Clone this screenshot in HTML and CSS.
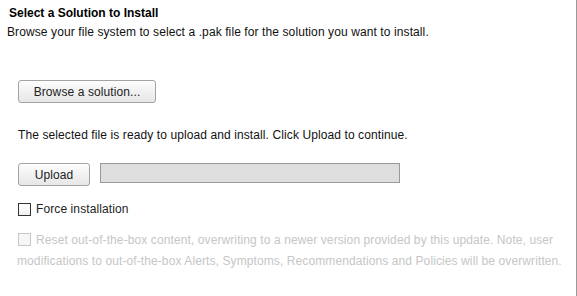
FILE: index.html
```html
<!DOCTYPE html>
<html>
<head>
<meta charset="utf-8">
<link rel="stylesheet" href="styles.css">
</head>
<body>
<div class="panel">
  <div class="header">
    <div class="title">Select a Solution to Install</div>
    <div class="desc">Browse your file system to select a .pak file for the solution you want to install.</div>
  </div>
  <div class="content">
    <button class="btn browse">Browse a solution...</button>
    <p class="status">The selected file is ready to upload and install. Click Upload to continue.</p>
    <div class="upload-row">
      <button class="btn upload">Upload</button>
      <div class="file-field"></div>
    </div>
    <label class="check"><span class="box"></span>Force installation</label>
    <p class="reset"><span class="box disabled"></span>Reset out-of-the-box content, overwriting to a newer version provided by this update. Note, user modifications to out-of-the-box Alerts, Symptoms, Recommendations and Policies will be overwritten.</p>
  </div>
</div>
</body>
</html>
```

FILE: styles.css
```css
html, body {
  margin: 0;
  padding: 0;
  background: #ffffff;
}
body {
  font-family: "Liberation Sans", Arial, sans-serif;
  font-size: 12px;
  line-height: 14px;
  color: #111;
  letter-spacing: 0.1px;
}
.panel {
  width: 576px;
  height: 296px;
  border-right: 1px solid #999;
  box-sizing: content-box;
}
.header {
  padding-top: 6px;
}
.title {
  padding-left: 9px;
  font-weight: bold;
  color: #000;
  letter-spacing: 0;
}
.desc {
  padding-left: 7px;
  margin-top: 5px;
  color: #111;
}
.content {
  padding: 41px 0 0 18px;
}
.btn {
  display: block;
  box-sizing: border-box;
  height: 23px;
  padding: 0;
  border: 1px solid #a3a3a3;
  border-radius: 3px;
  background: linear-gradient(#fdfdfd, #e6e6e6);
  font-family: "Liberation Sans", Arial, sans-serif;
  font-size: 12px;
  letter-spacing: 0.1px;
  color: #222;
}
.browse {
  width: 138px;
}
.status {
  margin: 25px 0 0 0;
}
.upload-row {
  display: flex;
  align-items: flex-start;
  margin-top: 21px;
}
.upload {
  width: 72px;
}
.file-field {
  box-sizing: border-box;
  width: 300px;
  height: 20px;
  margin-left: 10px;
  border: 1px solid #9a9a9a;
  background: #dedede;
}
.check {
  display: flex;
  align-items: center;
  margin-top: 16px;
  color: #222;
}
.box {
  display: inline-block;
  box-sizing: border-box;
  width: 13px;
  height: 13px;
  margin-right: 5px;
  border: 1px solid #333;
  background: linear-gradient(#fff, #f0f0f0);
}
.reset {
  margin: 14px 0 0 -1px;
  padding-right: 6px;
  line-height: 21px;
  color: #c6c6c6;
}
.box.disabled {
  margin-left: 1px;
  vertical-align: -2px;
  border-color: #c8c8c8;
  background: #f6f6f6;
}
```
